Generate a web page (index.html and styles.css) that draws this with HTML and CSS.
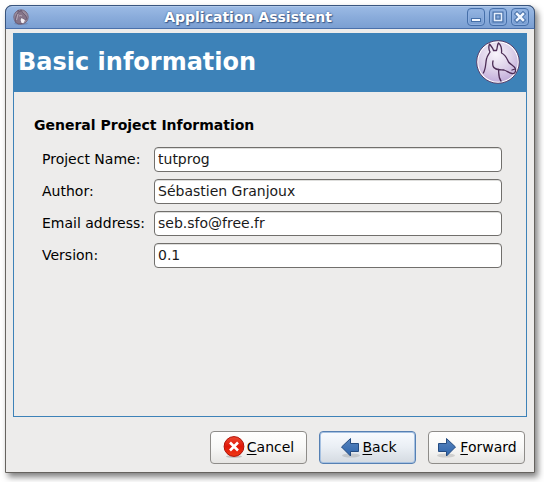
FILE: index.html
```html
<!DOCTYPE html>
<html lang="en">
<head>
<meta charset="utf-8">
<title>Application Assistent</title>
<link rel="stylesheet" href="styles.css">
</head>
<body>
<main class="window">
  <header class="titlebar">
    <svg class="app-icon" viewBox="0 0 16 16" aria-hidden="true">
      <ellipse cx="8" cy="14.6" rx="7" ry="1.2" fill="#5d78a8" opacity=".5"/>
      <circle cx="8" cy="8" r="7.2" fill="#9a8c9d" stroke="#776a80"/>
      <path d="M2 13 L3 7 5 3.500 5 1 7 3 8 1 9.500 3.500 13 7 14 10 12 11 8.500 9 7.500 11 9 14.500 5 15Z" fill="#857489" stroke="#5f5069" stroke-width=".7"/>
      <path d="M8.500 9 12 11 10.500 14 8.500 14 7.500 11Z" fill="#f4f0f5"/>
      <path d="M5 5 3.500 11 M6 7 Q8 6 9 7" fill="none" stroke="#b9acba"/>
    </svg>
    <span class="caption">Application Assistent</span>
    <div class="window-buttons">
      <button type="button" class="window-button" aria-label="Minimize"><svg viewBox="0 0 16 16"><rect x="3" y="9" width="10" height="4" fill="#456fa9"/><rect x="4" y="10" width="8" height="2" fill="#f2f7ff"/></svg></button>
      <button type="button" class="window-button" aria-label="Maximize"><svg viewBox="0 0 16 16"><rect x="4.500" y="4.500" width="7" height="7" fill="none" stroke="#456fa9" stroke-width="4"/><rect x="4.500" y="4.500" width="7" height="7" fill="none" stroke="#e6effc" stroke-width="1.600"/></svg></button>
      <button type="button" class="window-button" aria-label="Close"><svg viewBox="0 0 16 16"><path d="M5 5 11 11M11 5 5 11" stroke="#456fa9" stroke-width="4.500" stroke-linecap="square"/><path d="M5 5 11 11M11 5 5 11" stroke="#f2f7ff" stroke-width="2.500" stroke-linecap="square"/></svg></button>
    </div>
  </header>
  <form class="content">
    <section class="page">
      <div class="banner">
        <h1>Basic information</h1>
        <svg class="logo" viewBox="0 0 44 44" aria-hidden="true">
          <defs><radialGradient id="orb" cx=".45" cy=".3" r=".7"><stop offset="0" stop-color="#f8f5fb"/><stop offset=".55" stop-color="#dfd3ea"/><stop offset="1" stop-color="#c3aedb"/></radialGradient></defs>
          <circle cx="22" cy="22" r="21.300" fill="#fff" stroke="#553c6b"/>
          <circle cx="22" cy="22" r="19.800" fill="url(#orb)"/>
          <path d="M7.300 33C10 29 9.500 23 10.500 19C11 16 13 14 14 12C12.500 9 12.500 6.500 13.500 4C15 6 17 8 17.500 10.500L20.500 10.500C21.500 8 21 5 22.500 3C25 5 26 8 25.500 13C30 15 31 19 32.500 22C35 25 39 26 39.500 29C40 32 38.500 34 36 33.500C33 33 31 31 28 30C23 29.500 18 30 17 26C16.500 24 16.500 23 17 21M22.500 29.500C23 33 22 37 25 41M36 30L39 29" fill="none" stroke="#4c2c55" stroke-width="1.300" stroke-linecap="round" stroke-linejoin="round"/>
        </svg>
      </div>
      <fieldset class="fields">
        <legend>General Project Information</legend>
        <div class="grid">
          <label for="name">Project Name:</label><input id="name" type="text" value="tutprog">
          <label for="author">Author:</label><input id="author" type="text" value="Sébastien Granjoux">
          <label for="email">Email address:</label><input id="email" type="text" value="seb.sfo@free.fr">
          <label for="version">Version:</label><input id="version" type="text" value="0.1">
        </div>
      </fieldset>
    </section>
    <div class="actions">
      <button type="button" class="action">
        <svg viewBox="0 0 22 22" aria-hidden="true">
          <defs><linearGradient id="red" x2="0" y2="1"><stop offset="0" stop-color="#ed4a32"/><stop offset=".5" stop-color="#e01608"/><stop offset="1" stop-color="#f13b16"/></linearGradient></defs>
          <ellipse cx="11" cy="20.500" rx="8" ry="1.500" fill="#999" opacity=".5"/>
          <circle cx="11" cy="10.500" r="9.900" fill="url(#red)" stroke="#b01208"/>
          <path d="M7 6.500 15 14.500M15 6.500 7 14.500" stroke="#fff" stroke-width="2.600"/>
        </svg><span><u>C</u>ancel</span>
      </button>
      <button type="button" class="action focused">
        <svg viewBox="0 0 22 22" aria-hidden="true">
          <defs><linearGradient id="blue" x2="0" y2="1"><stop offset="0" stop-color="#5784bd"/><stop offset="1" stop-color="#2e65ad"/></linearGradient></defs>
          <ellipse cx="12" cy="19.500" rx="9" ry="2" fill="#888" opacity=".3"/>
          <path d="M2.500 11 11.500 2.500V7.500H19.500V15.500H11.500V20Z" fill="url(#blue)" stroke="#244b80"/>
        </svg><span><u>B</u>ack</span>
      </button>
      <button type="button" class="action">
        <svg viewBox="0 0 22 22" aria-hidden="true">
          <ellipse cx="10" cy="19.500" rx="9" ry="2" fill="#888" opacity=".3"/>
          <path d="M19.500 11 10.500 2.500V7.500H2.500V15.500H10.500V20Z" fill="url(#blue)" stroke="#244b80"/>
        </svg><span><u>F</u>orward</span>
      </button>
    </div>
  </form>
</main>
</body>
</html>
```
FILE: styles.css
```css
* { box-sizing: border-box; }

body {
  margin: 0;
  min-height: 100vh;
  padding: 5px 9px 9px 5px;
  display: flex;
  background: #fff;
  color: #000;
  font: 14px/18px "DejaVu Sans", sans-serif;
}

.window {
  flex: 1;
  display: flex;
  flex-direction: column;
  border: 1px solid #66635f;
  border-radius: 7px 7px 0 0;
  background: #edeceb;
  box-shadow: 3px 4px 6px rgba(0, 0, 0, .5);
}

.titlebar {
  display: flex;
  align-items: center;
  height: 24px;
  margin: -1px -1px 0;
  padding: 0 5px 0 7px;
  border: 1px solid #38557f;
  border-bottom-color: #4a70ab;
  border-radius: 7px 7px 0 0;
  background: linear-gradient(#9cbbe5, #8aacdb 50%, #7b9fd2);
  box-shadow: inset 0 1px #b1c9ea;
}

.app-icon { width: 16px; height: 16px; }

.caption {
  flex: 1;
  text-align: center;
  color: #fff;
  font-weight: bold;
  text-shadow: 1px 1px 1px #3c5c8c, 0 0 2px #3c5c8c;
}

.window-buttons { display: flex; gap: 4px; }

.window-button {
  width: 18px;
  height: 18px;
  padding: 0;
  border: 1px solid #456fa9;
  border-radius: 4px;
  background: linear-gradient(#94b5e2, #789dd0);
  box-shadow: inset 0 0 0 1px #8eafe0;
}

.window-button svg { display: block; width: 16px; height: 16px; }

.content {
  flex: 1;
  display: flex;
  flex-direction: column;
  padding: 4px 7px 8px;
}

.page { flex: 1; border: 1px solid #3d82b8; }

.banner {
  display: flex;
  justify-content: space-between;
  align-items: center;
  height: 58px;
  padding: 0 6px 2px 4px;
  background: #3d82b8;
}

h1 {
  margin: 0;
  color: #fff;
  font-size: 24px;
  line-height: 28px;
}

.logo { width: 44px; height: 44px; }

.fields { margin: 0; padding: 24px 24px 0 20px; border: 0; }

legend {
  float: left;
  width: 100%;
  padding: 0;
  font-weight: bold;
}

.grid {
  clear: both;
  display: grid;
  grid-template-columns: auto 1fr;
  align-items: center;
  gap: 7px 9px;
  padding: 13px 0 0 8px;
}

label { padding-bottom: 1px; }

input {
  width: 100%;
  height: 25px;
  padding: 0 4px 1px 3px;
  border: 1px solid #716f6c;
  border-radius: 4px;
  background: #fff;
  color: #1a1a1a;
  font: inherit;
  box-shadow: inset 0 1px #dededc;
}

.actions {
  display: flex;
  justify-content: flex-end;
  gap: 12px;
  padding: 14px 2px 0 0;
}

.action {
  display: flex;
  justify-content: center;
  align-items: center;
  gap: 2px;
  width: 97px;
  height: 33px;
  padding: 0 0 2px;
  border: 1px solid #8e8c89;
  border-radius: 4px;
  background: linear-gradient(#fff, #f8f8f7 50%, #e6e5e3);
  color: #000;
  font: inherit;
}

.action svg { width: 22px; height: 22px; }
.action u { text-underline-offset: 2px; }

.focused {
  border-color: #5680b3;
  background: linear-gradient(#f8fbff, #e9eef4 50%, #d4dae1);
  box-shadow: inset 0 0 0 1px #a6c1e1;
}
```
